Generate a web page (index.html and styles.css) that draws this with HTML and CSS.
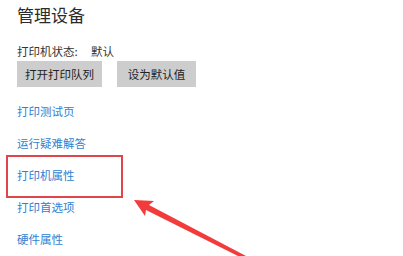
FILE: index.html
```html
<!DOCTYPE html>
<html lang="zh">
<head>
    <meta charset="UTF-8">
    <meta name="viewport" content="width=device-width, initial-scale=1.0">
    <title>管理设备</title>
    <link rel="stylesheet" href="styles.css">
</head>
<body>
    <div id="page">
        <h1 class="title">管理设备</h1>
        <div class="status">
            <span class="status-label">打印机状态:</span>
            <span class="status-value">默认</span>
        </div>
        <div class="btn-row">
            <button class="btn btn-queue">打开打印队列</button>
            <button class="btn btn-default">设为默认值</button>
        </div>
        <ul class="link-list">
            <li><a href="#" class="link">打印测试页</a></li>
            <li><a href="#" class="link">运行疑难解答</a></li>
            <li><a href="#" class="link">打印机属性</a></li>
            <li><a href="#" class="link">打印首选项</a></li>
            <li><a href="#" class="link">硬件属性</a></li>
        </ul>
        <div class="mark-box"></div>
        <svg class="mark-arrow" width="403" height="256" viewBox="0 0 403 256">
            <polygon points="134,200 154,201 149,205 246,256 238,256 146,210 145,216" fill="#f23c3c"/>
        </svg>
    </div>
</body>
</html>
```

FILE: styles.css
```css
html,
body{
    margin: 0;
    padding: 0;
    background: #fff;
}
#page{
    position: relative;
    width: 403px;
    height: 256px;
    overflow: hidden;
    padding: 4px 0 0 17px;
    box-sizing: border-box;
    font-family: "Microsoft YaHei", "Noto Sans CJK SC", sans-serif;
    color: #333;
}
.title{
    margin: 0;
    font-size: 17px;
    line-height: 22px;
    font-weight: normal;
    color: #2b2b2b;
}
.status{
    display: flex;
    margin-top: 17px;
    font-size: 11.5px;
    line-height: 16px;
}
.status-label{
    width: 74px;
}
.btn-row{
    display: flex;
    gap: 15px;
    margin-top: 2px;
}
.btn{
    height: 26px;
    padding: 0;
    border: none;
    background: #cdcdcd;
    font-family: inherit;
    font-size: 11.5px;
    color: #222;
}
.btn-queue{
    width: 85px;
}
.btn-default{
    width: 79px;
}
.link-list{
    list-style: none;
    margin: 16px 0 0;
    padding: 0;
    display: flex;
    flex-direction: column;
    gap: 16px;
}
.link{
    display: block;
    font-size: 11.5px;
    line-height: 16px;
    color: #2f7fd2;
    text-decoration: none;
}
.mark-box{
    position: absolute;
    left: 6px;
    top: 155px;
    width: 117px;
    height: 43px;
    border: 2px solid #e0454c;
    box-sizing: border-box;
}
.mark-arrow{
    position: absolute;
    left: 0;
    top: 0;
}
```
